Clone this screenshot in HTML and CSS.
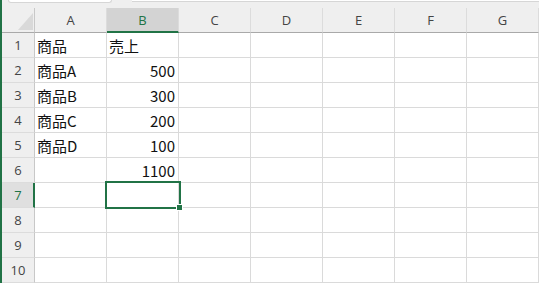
FILE: index.html
```html
<!DOCTYPE html>
<html lang="ja">
<head>
  <meta charset="UTF-8" />
  <title>Book1</title>
  <link rel="stylesheet" href="styles.css">
</head>
<body>
  <div class="edge"></div>
  <div class="sheet">
    <div class="topbar">
      <div class="namebox"></div>
      <div class="formula"></div>
    </div>
    <div class="grid">
      <div class="hd corner"><div class="tri"></div></div>
      <div class="hd col">A</div>
      <div class="hd col active">B</div>
      <div class="hd col">C</div>
      <div class="hd col">D</div>
      <div class="hd col">E</div>
      <div class="hd col">F</div>
      <div class="hd col">G</div>

      <div class="hd row">1</div>
      <div class="c">商品</div><div class="c">売上</div><div class="c"></div><div class="c"></div><div class="c"></div><div class="c"></div><div class="c"></div>

      <div class="hd row">2</div>
      <div class="c">商品A</div><div class="c num">500</div><div class="c"></div><div class="c"></div><div class="c"></div><div class="c"></div><div class="c"></div>

      <div class="hd row">3</div>
      <div class="c">商品B</div><div class="c num">300</div><div class="c"></div><div class="c"></div><div class="c"></div><div class="c"></div><div class="c"></div>

      <div class="hd row">4</div>
      <div class="c">商品C</div><div class="c num">200</div><div class="c"></div><div class="c"></div><div class="c"></div><div class="c"></div><div class="c"></div>

      <div class="hd row">5</div>
      <div class="c">商品D</div><div class="c num">100</div><div class="c"></div><div class="c"></div><div class="c"></div><div class="c"></div><div class="c"></div>

      <div class="hd row">6</div>
      <div class="c"></div><div class="c num">1100</div><div class="c"></div><div class="c"></div><div class="c"></div><div class="c"></div><div class="c"></div>

      <div class="hd row active">7</div>
      <div class="c"></div><div class="c sel"><div class="selbox"><div class="handle"></div></div></div><div class="c"></div><div class="c"></div><div class="c"></div><div class="c"></div><div class="c"></div>

      <div class="hd row">8</div>
      <div class="c"></div><div class="c"></div><div class="c"></div><div class="c"></div><div class="c"></div><div class="c"></div><div class="c"></div>

      <div class="hd row">9</div>
      <div class="c"></div><div class="c"></div><div class="c"></div><div class="c"></div><div class="c"></div><div class="c"></div><div class="c"></div>

      <div class="hd row">10</div>
      <div class="c"></div><div class="c"></div><div class="c"></div><div class="c"></div><div class="c"></div><div class="c"></div><div class="c"></div>
    </div>
  </div>
</body>
</html>
```

FILE: styles.css
```css
* {
  box-sizing: border-box;
}

body {
  margin: 0;
  display: flex;
  height: 283px;
  overflow: hidden;
  background: #fff;
  font-family: "Noto Sans CJK JP", "Noto Sans", sans-serif;
}

.edge {
  width: 2px;
  background: #217346;
  flex-shrink: 0;
}

.sheet {
  flex: 1;
  display: flex;
  flex-direction: column;
}

.topbar {
  height: 8px;
  background: #efefef;
  display: flex;
  gap: 20px;
  padding-left: 6px;
}

.namebox {
  width: 104px;
  height: 3px;
  background: #fff;
  border: 1px solid #d6d6d6;
  border-top: none;
  border-radius: 0 0 4px 4px;
}

.formula {
  flex: 1;
  height: 2px;
  background: #fff;
  border-bottom: 1px solid #d6d6d6;
}

.grid {
  display: grid;
  grid-template-columns: 33px repeat(7, 72px);
  grid-auto-rows: 25px;
}

.hd {
  background: #efefef;
  color: #444;
  font-family: "Open Sans", "Noto Sans", sans-serif;
  font-size: 13px;
  display: flex;
  align-items: center;
  justify-content: center;
}

.corner {
  border-right: 1px solid #c8c8c8;
  border-bottom: 1px solid #a9a9a9;
  align-items: flex-end;
  justify-content: flex-end;
  padding: 0 1px 2px 0;
}

.tri {
  width: 15px;
  height: 17px;
  background: #d9d9d9;
  clip-path: polygon(100% 0, 100% 100%, 0 100%);
}

.col {
  border-right: 1px solid #dcdcdc;
  border-bottom: 1px solid #a9a9a9;
}

.col.active {
  background: #d3d3d3;
  color: #217346;
  border-bottom: 2px solid #217346;
  padding-top: 1px;
}

.row {
  border-right: 1px solid #c8c8c8;
  border-bottom: 1px solid #dcdcdc;
}

.row.active {
  background: #dfdfdf;
  color: #217346;
  border-right: 2px solid #217346;
  padding-left: 1px;
}

.c {
  border-right: 1px solid #dadada;
  border-bottom: 1px solid #dadada;
  font-size: 15px;
  color: #111;
  display: flex;
  align-items: center;
  padding: 0 3px 0 2px;
  white-space: nowrap;
}

.num {
  justify-content: flex-end;
}

.sel {
  position: relative;
}

.selbox {
  position: absolute;
  top: -2px;
  left: -2px;
  right: -3px;
  bottom: -2px;
  border: 2px solid #217346;
}

.handle {
  position: absolute;
  right: -4px;
  bottom: -4px;
  width: 7px;
  height: 7px;
  background: #217346;
  border: 1px solid #fff;
}
```
